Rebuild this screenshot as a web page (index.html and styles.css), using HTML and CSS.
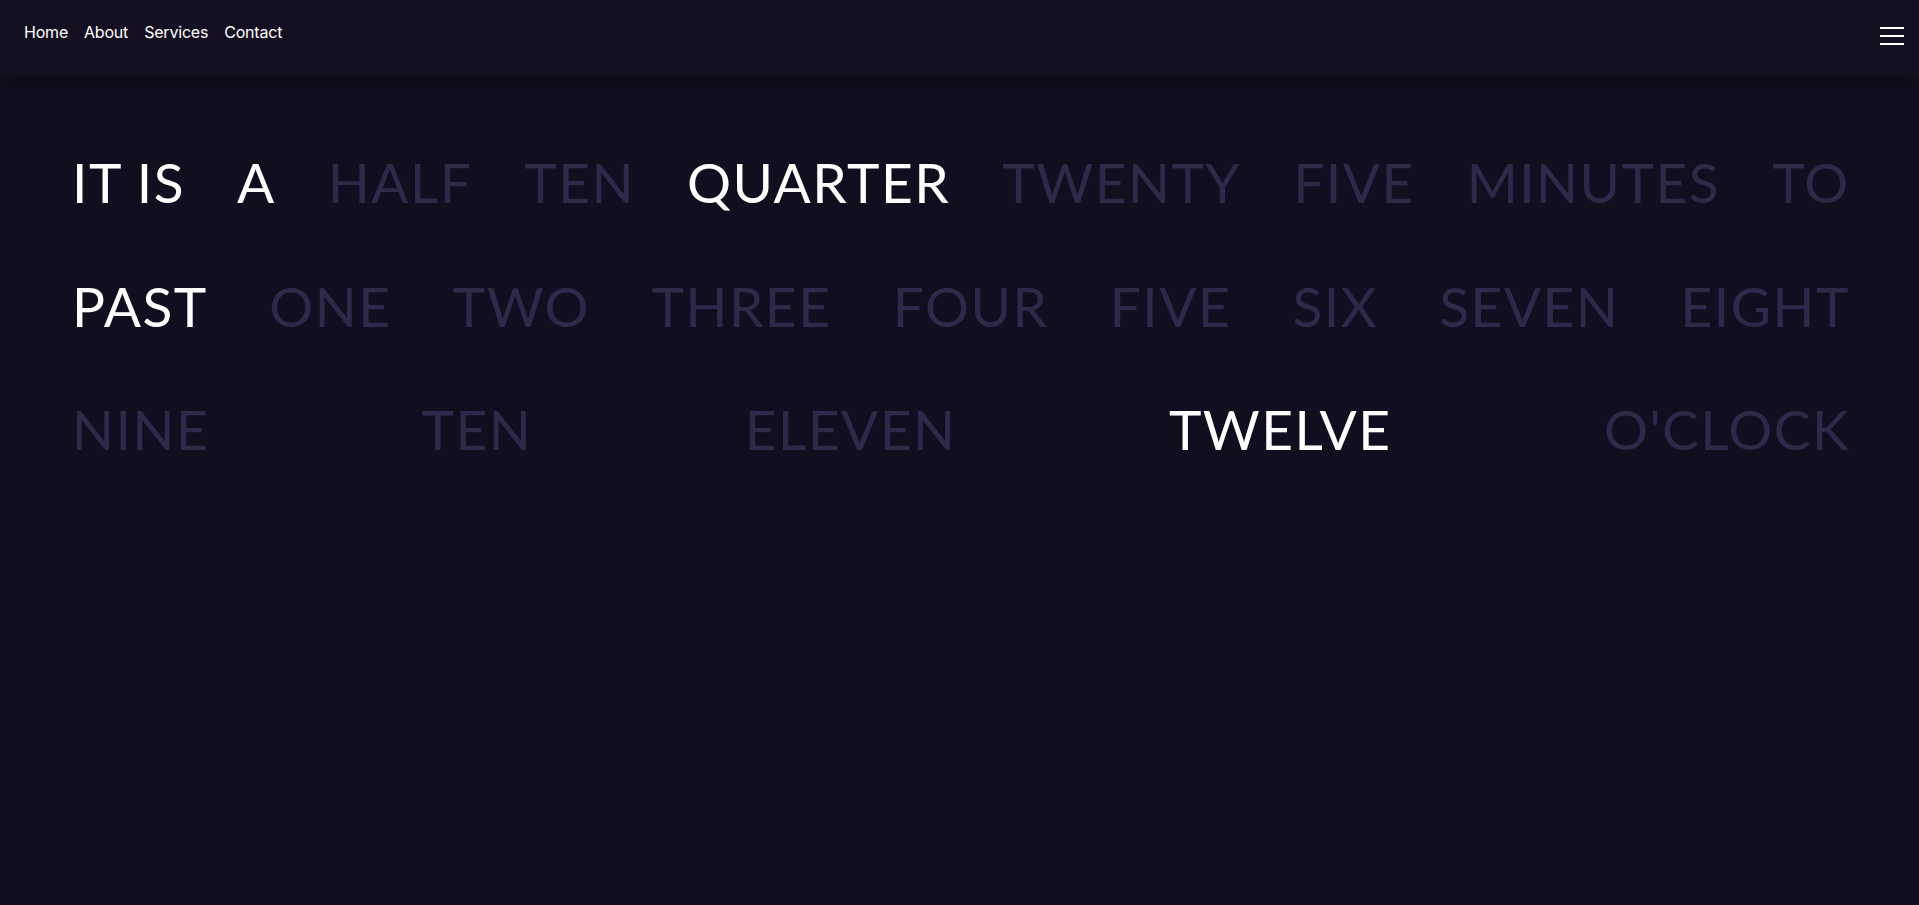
FILE: index.html
```html
<!DOCTYPE html>
<html lang="en">
<head>
<meta charset="utf-8">
<title>Word Clock</title>
<link rel="stylesheet" href="styles.css">
</head>
<body>
<header class="topbar">
  <nav class="nav">
    <a class="nav-link" href="#">Home</a>
    <a class="nav-link" href="#">About</a>
    <a class="nav-link" href="#">Services</a>
    <a class="nav-link" href="#">Contact</a>
  </nav>
  <button class="burger" aria-label="Menu">
    <span class="burger-line"></span>
    <span class="burger-line"></span>
    <span class="burger-line"></span>
  </button>
</header>
<main class="clock">
  <div class="clock-row">
    <span class="word on">IT IS</span>
    <span class="word on">A</span>
    <span class="word">HALF</span>
    <span class="word">TEN</span>
    <span class="word on">QUARTER</span>
    <span class="word">TWENTY</span>
    <span class="word">FIVE</span>
    <span class="word">MINUTES</span>
    <span class="word">TO</span>
  </div>
  <div class="clock-row">
    <span class="word on">PAST</span>
    <span class="word">ONE</span>
    <span class="word">TWO</span>
    <span class="word">THREE</span>
    <span class="word">FOUR</span>
    <span class="word">FIVE</span>
    <span class="word">SIX</span>
    <span class="word">SEVEN</span>
    <span class="word">EIGHT</span>
  </div>
  <div class="clock-row">
    <span class="word">NINE</span>
    <span class="word">TEN</span>
    <span class="word">ELEVEN</span>
    <span class="word on">TWELVE</span>
    <span class="word">O'CLOCK</span>
  </div>
</main>
</body>
</html>
```

FILE: styles.css
```css
html, body {
  margin: 0;
  padding: 0;
}

body {
  background: #130e1f;
  min-height: 905px;
  font-family: "Lato", "Noto Sans", sans-serif;
  color: #ffffff;
}

.topbar {
  height: 77px;
  box-sizing: border-box;
  padding: 0 15px 0 24px;
  display: flex;
  justify-content: space-between;
  align-items: flex-start;
  background: #140f21;
  box-shadow: 0 4px 16px rgba(0, 0, 0, 0.35);
  position: relative;
  z-index: 1;
}

.nav {
  display: flex;
  gap: 16px;
  padding-top: 22px;
}

.nav-link {
  font-family: "Inter", "Liberation Sans", sans-serif;
  font-size: 16px;
  line-height: 20px;
  letter-spacing: -0.2px;
  color: #ffffff;
  text-decoration: none;
}

.burger {
  margin-top: 27px;
  width: 24px;
  padding: 0;
  border: 0;
  background: none;
  display: flex;
  flex-direction: column;
  gap: 6px;
  cursor: pointer;
}

.burger-line {
  display: block;
  width: 24px;
  height: 2px;
  background: #ffffff;
}

.clock {
  padding: 44px 69px 0 72px;
}

.clock-row {
  display: flex;
  justify-content: space-between;
  font-size: 55px;
  line-height: 123.5px;
  font-weight: 400;
  letter-spacing: 1.5px;
}

.word {
  color: #2f2848;
  white-space: pre;
}

.word.on {
  color: #ffffff;
}
```
